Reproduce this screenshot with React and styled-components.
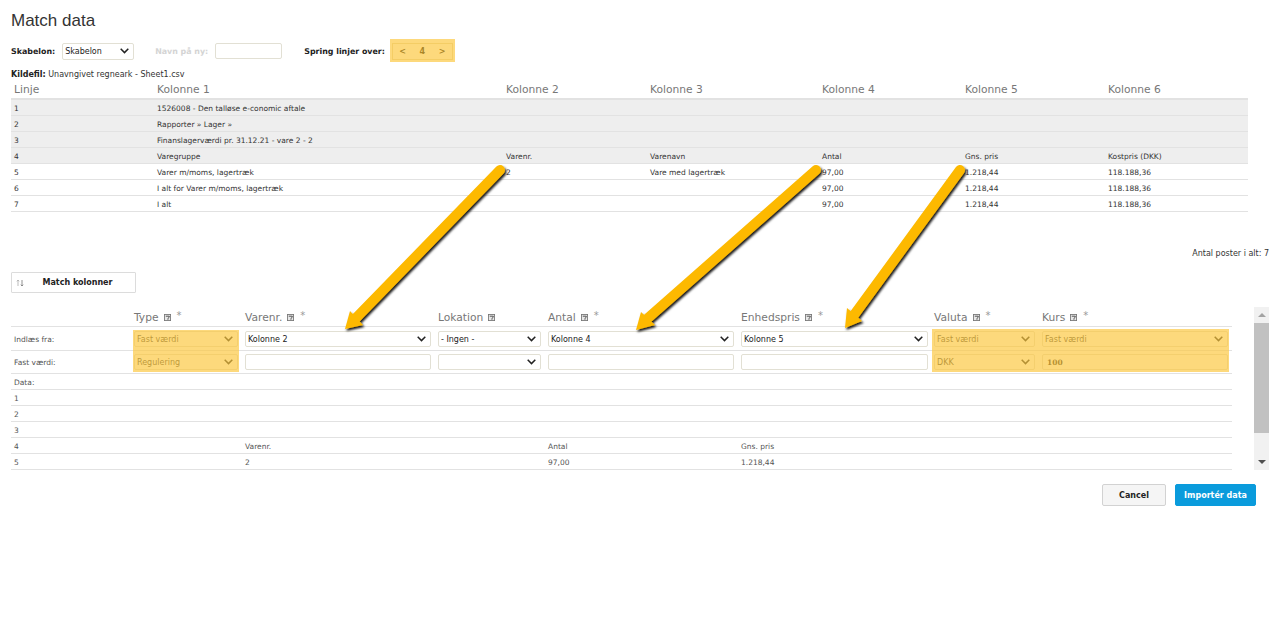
import styled, { createGlobalStyle } from 'styled-components';

const GlobalStyle = createGlobalStyle`
  html, body {
    margin: 0;
    padding: 0;
    background: #fff;
    font-family: "DejaVu Sans", Verdana, sans-serif;
    font-size: 8px;
    color: #222;
  }
`;

const Page = styled.div`
  position: relative;
  width: 1280px;
  height: 628px;
  overflow: hidden;
  padding: 12px 0 0 11px;
  box-sizing: border-box;
`;

const Title = styled.h1`
  margin: 0;
  height: 18px;
  font: 400 17px/18px "Liberation Sans", Arial, sans-serif;
  color: #333;
`;

const Toolbar = styled.div`
  display: flex;
  align-items: center;
  height: 18px;
  margin-top: 12px;
`;

const FieldLabel = styled.label`
  font-weight: 700;
  font-size: 7.9px;
  color: ${(p) => (p.$muted ? '#d4d4d4' : '#222')};
  margin-left: ${(p) => p.$left ?? 0}px;
  margin-right: ${(p) => p.$right ?? 7}px;
  white-space: nowrap;
`;

const SelectBox = styled.div`
  position: relative;
  width: ${(p) => p.$width}px;
  height: ${(p) => p.$height || 16}px;
`;

const NativeSelect = styled.select`
  appearance: none;
  box-sizing: border-box;
  display: block;
  width: 100%;
  height: 100%;
  padding: 1px 0 0 2px;
  margin: 0;
  font-family: "DejaVu Sans", sans-serif;
  font-size: 8px;
  color: ${(p) => (p.$faded ? '#3c3c3c' : '#222')};
  background: #fff;
  border: 1px solid #e2e0d4;
  border-radius: 2px;
`;

const Chevron = styled.svg`
  position: absolute;
  right: 5px;
  top: 50%;
  margin-top: -3px;
  pointer-events: none;
`;

const TextInput = styled.input`
  box-sizing: border-box;
  width: ${(p) => p.$width}px;
  height: 16px;
  padding: 1px 0 0 4px;
  margin: 0;
  font-family: "DejaVu Serif", serif;
  font-weight: 700;
  font-size: 7.5px;
  color: #222;
  background: #fff;
  border: 1px solid #e2e0d4;
  border-radius: 2px;
`;

const Stepper = styled.div`
  box-sizing: border-box;
  display: grid;
  grid-template-columns: repeat(3, 1fr);
  align-items: center;
  justify-items: center;
  width: 61px;
  height: 17px;
  margin-left: 7px;
  background: #fff;
  border: 1px solid #e2d9b8;
  font-weight: 700;
  font-size: 8px;
  color: #000;
`;

const SourceFile = styled.div`
  margin-top: 10px;
  height: 10px;
  line-height: 10px;
  font-size: 8px;
  color: #333;
  b {
    color: #222;
  }
`;

const Grid = styled.div`
  width: ${(p) => p.$width}px;
`;

const SheetRow = styled.div`
  display: grid;
  grid-template-columns: 143px 349px 144px 172px 143px 143px 1fr;
  box-sizing: border-box;
  height: 16px;
  padding: 1px 0 0 3px;
  align-items: center;
  font-size: 7.5px;
  color: #333;
  background: ${(p) => (p.$skipped ? '#eeeeee' : '#fff')};
  border-bottom: 1px solid #e2e2e2;
`;

const SheetHead = styled(SheetRow)`
  height: 19px;
  margin-top: 1px;
  padding-top: 0;
  font-size: 10.7px;
  color: #777;
  border-bottom: 2px solid #e2e2e2;
`;

const Totals = styled.div`
  width: 1258px;
  margin-top: 37px;
  text-align: right;
  font-size: 8px;
  line-height: 10px;
  color: #333;
`;

const MatchButton = styled.button`
  display: flex;
  align-items: center;
  box-sizing: border-box;
  width: 125px;
  height: 21px;
  margin-top: 13px;
  padding: 0 0 0 4px;
  background: #fff;
  border: 1px solid #dcdcdc;
  border-radius: 1px;
  font-family: inherit;
  font-weight: 700;
  font-size: 8px;
  color: #222;
  span {
    flex: 1;
    padding-right: 4px;
    text-align: center;
  }
`;

const MappingArea = styled.div`
  display: flex;
  margin-top: 14px;
`;

const MappingTable = styled.div`
  width: 1221px;
  padding-top: 1px;
`;

const MappingCols = styled.div`
  display: grid;
  grid-template-columns: 120px 111px 193px 110px 193px 193px 108px 1fr;
  box-sizing: border-box;
  align-items: center;
  height: ${(p) => p.$height || 16}px;
  padding-left: 3px;
  font-size: 7.5px;
  color: #555;
  border-bottom: 1px solid #e2e2e2;
`;

const RowLabel = styled.div`
  padding-top: 1px;
`;

const ColTitle = styled.div`
  display: flex;
  align-items: center;
  font-size: 10.7px;
  color: #777;
  gap: 5px;
  i {
    font-style: normal;
    font-size: 10px;
    margin: -3px 0 0 1px;
    color: #999;
  }
`;

const Scrollbar = styled.div`
  position: relative;
  width: 15px;
  height: 163px;
  margin-left: 22px;
  background: #f1f1f1;
`;

const ScrollThumb = styled.div`
  position: absolute;
  left: 0;
  top: 16px;
  width: 100%;
  height: 110px;
  background: #c1c1c1;
`;

const ScrollArrow = styled.div`
  position: absolute;
  left: 4px;
  ${(p) => (p.$down ? 'bottom: 6px;' : 'top: 6px;')}
  width: 0;
  height: 0;
  border-left: 4px solid transparent;
  border-right: 4px solid transparent;
  ${(p) => (p.$down ? 'border-top: 4px solid #505050;' : 'border-bottom: 4px solid #a3a3a3;')}
`;

const Actions = styled.div`
  display: flex;
  justify-content: flex-end;
  gap: 9px;
  width: 1245px;
  margin-top: 14px;
`;

const ActionButton = styled.button`
  box-sizing: border-box;
  width: ${(p) => p.$width}px;
  height: 22px;
  padding: 0;
  font-family: inherit;
  font-weight: 700;
  font-size: 8px;
  border-radius: 2px;
  color: ${(p) => (p.$primary ? '#fff' : '#222')};
  background: ${(p) => (p.$primary ? '#0a9bdc' : '#f5f5f5')};
  border: 1px solid ${(p) => (p.$primary ? '#0a9bdc' : '#d2d2d2')};
`;

const AnnotationLayer = styled.svg`
  position: absolute;
  left: 0;
  top: 0;
  pointer-events: none;
`;

const Dropdown = ({ width, height, value, faded }) => (
  <SelectBox $width={width} $height={height}>
    <NativeSelect $faded={faded} defaultValue={value}>
      <option>{value}</option>
    </NativeSelect>
    <Chevron width="9" height="6" viewBox="0 0 9 6" fill="none" stroke="#222" strokeWidth="1.5">
      <path d="M0.7 0.8 4.5 4.6 8.3 0.8" />
    </Chevron>
  </SelectBox>
);

const HelpIcon = () => (
  <svg width="7" height="7" viewBox="0 0 8 8">
    <rect x="0.5" y="0.5" width="7" height="7" fill="#e8e8e8" stroke="#777" />
    <path d="M2 2.5h4v1.2L4.5 5v1.5" fill="none" stroke="#444" />
  </svg>
);

const SwapIcon = () => (
  <svg width="8" height="8" viewBox="0 0 8 8" fill="none" stroke="#aaa" strokeWidth="0.8">
    <path d="M2 7V1M0.8 2.3 2 1l1.2 1.3" />
    <path d="M6 1v6M4.8 5.7 6 7l1.2-1.3" stroke="#777" />
  </svg>
);

const sheetRows = [
  { skipped: true, cells: ['1', '1526008 - Den talløse e-conomic aftale'] },
  { skipped: true, cells: ['2', 'Rapporter » Lager »'] },
  { skipped: true, cells: ['3', 'Finanslagerværdi pr. 31.12.21 - vare 2 - 2'] },
  { skipped: true, cells: ['4', 'Varegruppe', 'Varenr.', 'Varenavn', 'Antal', 'Gns. pris', 'Kostpris (DKK)'] },
  { cells: ['5', 'Varer m/moms, lagertræk', '2', 'Vare med lagertræk', '97,00', '1.218,44', '118.188,36'] },
  { cells: ['6', 'I alt for Varer m/moms, lagertræk', '', '', '97,00', '1.218,44', '118.188,36'] },
  { cells: ['7', 'I alt', '', '', '97,00', '1.218,44', '118.188,36'] },
];

const dataRows = [
  ['Data:'],
  ['1'],
  ['2'],
  ['3'],
  ['4', '', 'Varenr.', '', 'Antal', 'Gns. pris'],
  ['5', '', '2', '', '97,00', '1.218,44'],
];

const mappingTitles = [
  ['Type', true],
  ['Varenr.', true],
  ['Lokation', false],
  ['Antal', true],
  ['Enhedspris', true],
  ['Valuta', true],
  ['Kurs', true],
];

// the yellow marks and arrows drawn on top of the screenshot
const highlights = [
  { x: 390, y: 39, w: 65, h: 23 },
  { x: 133, y: 330, w: 106, h: 42 },
  { x: 932, y: 329, w: 297, h: 43 },
];

const arrows = [
  { from: [500, 170], to: [356, 318], head: 'M345 329 350 311 363 325Z' },
  { from: [816, 170], to: [648, 318], head: 'M636 330 641 312 655 325Z' },
  { from: [960, 170], to: [854, 315], head: 'M845 328 847 308 862 321Z' },
];

const App = () => {
  return (
    <Page>
      <GlobalStyle />
      <Title>Match data</Title>

      <Toolbar>
        <FieldLabel>Skabelon:</FieldLabel>
        <Dropdown width={72} height={17} value="Skabelon" />
        <FieldLabel $muted $left={21}>Navn på ny:</FieldLabel>
        <TextInput $width={67} />
        <FieldLabel $left={22} $right={0}>Spring linjer over:</FieldLabel>
        <Stepper>
          <span>&lt;</span>
          <span>4</span>
          <span>&gt;</span>
        </Stepper>
      </Toolbar>

      <SourceFile>
        <b>Kildefil:</b> Unavngivet regneark - Sheet1.csv
      </SourceFile>

      <Grid $width={1237}>
        <SheetHead>
          <div>Linje</div>
          <div>Kolonne 1</div>
          <div>Kolonne 2</div>
          <div>Kolonne 3</div>
          <div>Kolonne 4</div>
          <div>Kolonne 5</div>
          <div>Kolonne 6</div>
        </SheetHead>
        {sheetRows.map((row) => (
          <SheetRow key={row.cells[0]} $skipped={row.skipped}>
            {row.cells.map((cell, i) => (
              <div key={i}>{cell}</div>
            ))}
          </SheetRow>
        ))}
      </Grid>

      <Totals>Antal poster i alt: 7</Totals>

      <MatchButton>
        <SwapIcon />
        <span>Match kolonner</span>
      </MatchButton>

      <MappingArea>
        <MappingTable>
          <MappingCols $height={19}>
            <div />
            {mappingTitles.map(([title, required]) => (
              <ColTitle key={title}>
                {title} <HelpIcon />
                {required && <i>*</i>}
              </ColTitle>
            ))}
          </MappingCols>
          <MappingCols $height={24}>
            <RowLabel>Indlæs fra:</RowLabel>
            <Dropdown faded width={104} value="Fast værdi" />
            <Dropdown width={186} value="Kolonne 2" />
            <Dropdown width={103} value="- Ingen -" />
            <Dropdown width={186} value="Kolonne 4" />
            <Dropdown width={187} value="Kolonne 5" />
            <Dropdown faded width={101} value="Fast værdi" />
            <Dropdown faded width={186} value="Fast værdi" />
          </MappingCols>
          <MappingCols $height={23}>
            <RowLabel>Fast værdi:</RowLabel>
            <Dropdown faded width={104} value="Regulering" />
            <TextInput $width={186} />
            <Dropdown width={103} value="" />
            <TextInput $width={186} />
            <TextInput $width={187} />
            <Dropdown faded width={101} value="DKK" />
            <TextInput $width={186} defaultValue="100" />
          </MappingCols>
          {dataRows.map((row) => (
            <MappingCols key={row[0]}>
              {row.map((cell, i) => (
                <RowLabel key={i}>{cell}</RowLabel>
              ))}
            </MappingCols>
          ))}
        </MappingTable>
        <Scrollbar>
          <ScrollArrow />
          <ScrollThumb />
          <ScrollArrow $down />
        </Scrollbar>
      </MappingArea>

      <Actions>
        <ActionButton $width={64}>Cancel</ActionButton>
        <ActionButton $primary $width={81}>Importér data</ActionButton>
      </Actions>

      <AnnotationLayer width="1280" height="628" viewBox="0 0 1280 628">
        <defs>
          <filter id="arrowShadow" x="-20%" y="-20%" width="140%" height="140%">
            <feDropShadow dx="1.5" dy="2" stdDeviation="1" floodColor="#000" floodOpacity="0.9" />
          </filter>
        </defs>
        {highlights.map((h) => (
          <rect key={h.x} x={h.x} y={h.y} width={h.w} height={h.h} fill="#fcc63c" fillOpacity="0.67" />
        ))}
        {arrows.map((a) => (
          <g key={a.head} filter="url(#arrowShadow)">
            <path
              d={`M${a.from[0]} ${a.from[1]}L${a.to[0]} ${a.to[1]}`}
              stroke="#fdb900"
              strokeWidth="10"
              strokeLinecap="round"
              fill="none"
            />
            <path d={a.head} fill="#fdb900" />
          </g>
        ))}
      </AnnotationLayer>
    </Page>
  );
};

export default App;
